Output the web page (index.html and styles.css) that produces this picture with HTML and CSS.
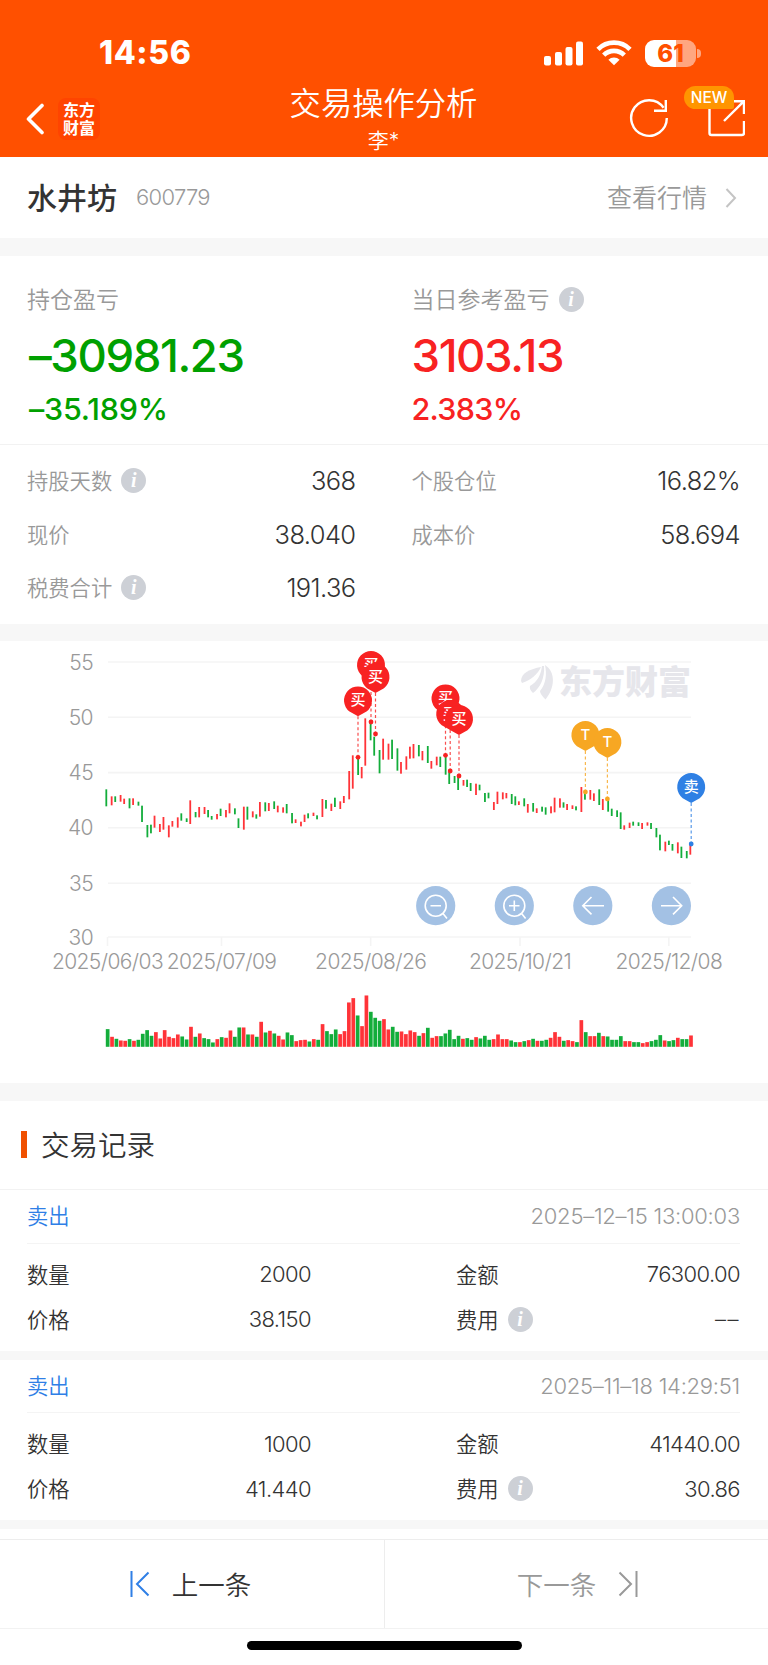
FILE: index.html
```html
<!DOCTYPE html>
<html lang="zh-CN">
<head>
    <meta charset="UTF-8">
    <meta name="viewport" content="width=device-width, initial-scale=1.0">
    <title>交易操作分析</title>
    <link rel="stylesheet" href="styles.css">
</head>
<body>
    <header class="header">
        <div class="status-bar">
            <span class="time">14:56</span>
            <div class="status-icons">
                <svg width="40" height="25" viewBox="0 0 40 25" fill="#fff">
                    <rect x="0" y="15" width="7" height="9.5" rx="2"/>
                    <rect x="11" y="11" width="7" height="13.5" rx="2"/>
                    <rect x="21.5" y="6" width="7" height="18.5" rx="2"/>
                    <rect x="32" y="0.5" width="7" height="24" rx="2"/>
                </svg>
                <svg class="wifi" width="36" height="26" viewBox="0 0 36 26" fill="none" stroke="#fff" stroke-width="4.6">
                    <path d="M2 9.3a22.5 22.5 0 0 1 32 0"/>
                    <path d="M7.7 15.2a14.5 14.5 0 0 1 20.6 0"/>
                    <path d="M18 25.2l-5.6-5.4a8 8 0 0 1 11.2 0z" fill="#fff" stroke="none"/>
                </svg>
                <div class="battery"><span>61</span></div>
                <div class="battery-tip"></div>
            </div>
        </div>
        <nav class="nav">
            <div class="nav-left">
                <svg width="18" height="32" viewBox="0 0 18 32" fill="none" stroke="#fff" stroke-width="3.6" stroke-linecap="round" stroke-linejoin="round"><path d="M16 2.5L2.5 16 16 29.5"/></svg>
                <div class="brand">东方<br>财富</div>
            </div>
            <div class="nav-title">
                <h1>交易操作分析</h1>
                <p>李*</p>
            </div>
            <div class="nav-right">
                <svg width="40" height="40" viewBox="0 0 40 40" fill="none" stroke="#fff" stroke-width="2.4">
                    <path d="M37.8 20A17.8 17.8 0 1 1 34.6 9.800"/>
                    <path d="M36.8 2v10.8H25"/>
                </svg>
                <div class="share">
                    <svg width="38" height="38" viewBox="0 0 38 38" fill="none" stroke="#fff" stroke-width="2.4">
                        <path d="M2.500 9v25a2 2 0 0 0 2 2H35a2 2 0 0 0 2-2V22"/>
                        <path d="M25 2.200H37V15M37 2.200L17 22"/>
                    </svg>
                    <span class="badge">NEW</span>
                </div>
            </div>
        </nav>
    </header>

    <section class="stock">
        <span class="stock-name">水井坊</span>
        <span class="stock-code">600779</span>
        <span class="stock-link">查看行情</span>
        <svg width="12" height="20" viewBox="0 0 12 20" fill="none" stroke="#c4c4c4" stroke-width="2"><path d="M1.500 1L10 10 1.500 19"/></svg>
    </section>

    <section class="position">
        <div class="profit two-col">
            <div class="down">
                <div class="label"><span>持仓盈亏</span></div>
                <div class="amount">–30981.23</div>
                <div class="percent">–35.189%</div>
            </div>
            <div class="up">
                <div class="label"><span>当日参考盈亏</span><i class="info">i</i></div>
                <div class="amount">3103.13</div>
                <div class="percent">2.383%</div>
            </div>
        </div>
        <div class="details two-col">
            <div class="row"><span>持股天数</span><i class="info">i</i><b>368</b></div>
            <div class="row"><span>个股仓位</span><b>16.82%</b></div>
            <div class="row"><span>现价</span><b>38.040</b></div>
            <div class="row"><span>成本价</span><b>58.694</b></div>
            <div class="row"><span>税费合计</span><i class="info">i</i><b>191.36</b></div>
        </div>
    </section>

    <section class="chart">
        <svg width="768" height="442" viewBox="0 1 768 442">
            <g id="grid"></g>
            <g class="watermark">
                <path d="M521 41C521 33 530 29 541 27C538 34 531 40 522 43Z"/>
                <path d="M544 26C545 38 540 48 533 53C530 50 529.500 48 530 46C537 42 541 35 542 26Z"/>
                <path d="M545 25C556 32 555 48 545.500 59.500C542 56 540 53 540 51C546 44 547 34 545 25Z"/>
                <text x="559" y="54">东方财富</text>
            </g>
            <g id="candles"></g>
            <g id="volumes"></g>
            <g id="pins"></g>
            <g class="tools">
                <circle cx="435.700" cy="265.700" r="19.600"/>
                <circle cx="514.300" cy="265.700" r="19.600"/>
                <circle cx="592.800" cy="265.700" r="19.600"/>
                <circle cx="671.400" cy="265.700" r="19.600"/>
                <path d="M446.200 265.700a10.500 10.500 0 1 1-21 0a10.500 10.500 0 1 1 21 0zM443 273.500l4 5M430.500 265.700h10.500"/>
                <path d="M524.800 265.700a10.500 10.500 0 1 1-21 0a10.500 10.500 0 1 1 21 0zM521.600 273.500l4 5M509 265.700h10.500M514.300 260.500v10.500"/>
                <path d="M604 265.700h-21M591.500 257l-8.700 8.700 8.700 8.700"/>
                <path d="M661 265.700h21M673 257l8.700 8.700-8.700 8.700"/>
            </g>
        </svg>
    </section>

    <section class="records">
        <h2><span>交易记录</span></h2>
        <div class="record">
            <div class="record-head"><span>卖出</span><time>2025–12–15 13:00:03</time></div>
            <div class="record-body">
                <div class="row"><span>数量</span><b>2000</b></div>
                <div class="row"><span>金额</span><b>76300.00</b></div>
                <div class="row"><span>价格</span><b>38.150</b></div>
                <div class="row"><span>费用</span><i class="info">i</i><b class="empty">––</b></div>
            </div>
        </div>
        <div class="record">
            <div class="record-head"><span>卖出</span><time>2025–11–18 14:29:51</time></div>
            <div class="record-body">
                <div class="row"><span>数量</span><b>1000</b></div>
                <div class="row"><span>金额</span><b>41440.00</b></div>
                <div class="row"><span>价格</span><b>41.440</b></div>
                <div class="row"><span>费用</span><i class="info">i</i><b>30.86</b></div>
            </div>
        </div>
    </section>

    <footer class="pager">
        <div class="prev">
            <svg width="20" height="26" viewBox="0 0 20 26" fill="none" stroke="#2f7fe6" stroke-width="2"><path d="M1.500 0v26M18.500 1.500L7 13l11.500 11.500"/></svg>
            <span>上一条</span>
        </div>
        <div class="next">
            <span>下一条</span>
            <svg width="20" height="26" viewBox="0 0 20 26" fill="none" stroke="#999" stroke-width="2"><path d="M18.500 0v26M1.500 1.500L13 13 1.500 24.500"/></svg>
        </div>
    </footer>
    <div class="home-bar"></div>

    <script src="chart.js"></script>
</body>
</html>
```
FILE: styles.css
```css
* {
    box-sizing: border-box;
}

body {
    margin: 0;
    width: 768px;
    height: 1665px;
    overflow: hidden;
    background: #fff;
    color: #333;
    font-family: Inter, "Noto Sans CJK SC", sans-serif;
    font-weight: 350;
    display: flex;
    flex-direction: column;
}

h1, h2, p {
    margin: 0;
    font-weight: 350;
}

svg {
    display: block;
    flex: none;
}

/* header */
.header {
    height: 157px;
    flex: none;
    background: #ff5000;
    color: #fff;
}

.status-bar {
    height: 82px;
    padding: 37px 67px 13px 99px;
    display: flex;
    align-items: center;
    justify-content: space-between;
}

.time {
    font-size: 32px;
    font-weight: 800;
    line-height: 32px;
    letter-spacing: 0.6px;
}

.status-icons {
    display: flex;
    align-items: center;
}

.wifi {
    margin: 0 13px 0 12px;
}

.battery {
    width: 51px;
    height: 27px;
    border-radius: 9px;
    background: linear-gradient(90deg, #fff 61%, #ffa680 61%);
    color: #ff5000;
    font-size: 24px;
    font-weight: 800;
    line-height: 28px;
    text-align: center;
}

.battery-tip {
    width: 4px;
    height: 9px;
    margin-left: 1px;
    border-radius: 0 4px 4px 0;
    background: #ffa680;
}

.nav {
    height: 75px;
    padding: 0 23px 0 26px;
    display: grid;
    grid-template-columns: 1fr auto 1fr;
}

.nav-left {
    display: flex;
    align-items: center;
    gap: 14px;
    height: 73px;
}

.brand {
    width: 42px;
    height: 42px;
    padding-top: 2px;
    border-radius: 8px;
    background: #ff4400;
    font-family: "Noto Sans CJK SC", sans-serif;
    font-size: 16px;
    font-weight: 700;
    line-height: 18px;
    text-align: center;
}

.nav-title {
    padding-top: 1px;
    text-align: center;
}

.nav-title h1 {
    margin-right: 4px;
    font-size: 31.3px;
    line-height: 42px;
}

.nav-title p {
    margin-right: 4px;
    font-size: 21px;
    line-height: 31px;
}

.nav-right {
    display: flex;
    align-items: center;
    justify-content: flex-end;
    gap: 38px;
    height: 72px;
}

.share {
    position: relative;
}

.badge {
    position: absolute;
    top: -13px;
    left: -23px;
    width: 50px;
    height: 23px;
    border-radius: 12px 12px 2px 12px;
    background: #ff9500;
    font-size: 15.5px;
    font-weight: 500;
    line-height: 23px;
    text-align: center;
}

/* stock name */
.stock {
    height: 81px;
    flex: none;
    padding: 0 31px 0 27px;
    display: flex;
    align-items: center;
}

.stock-name {
    padding-bottom: 3px;
    font-size: 30px;
    font-weight: 500;
}

.stock-code {
    margin-left: 19px;
    padding-bottom: 1px;
    color: #999;
    font-size: 22px;
    letter-spacing: -0.7px;
}

.stock-link {
    margin-left: auto;
    margin-right: 18px;
    padding-bottom: 3px;
    color: #999;
    font-size: 25px;
}

/* position */
.position {
    height: 403px;
    flex: none;
    border-top: 18px solid #f7f7f7;
    border-bottom: 17px solid #f7f7f7;
}

.two-col {
    padding: 0 28px 0 27px;
    display: grid;
    grid-template-columns: 1fr 1fr;
    column-gap: 56px;
}

.profit {
    height: 189px;
    padding-top: 28px;
    border-bottom: 1px solid #f2f2f2;
}

.label {
    display: flex;
    align-items: center;
    height: 30px;
    color: #999;
    font-size: 23px;
}

.label span {
    padding-bottom: 2px;
}

.amount {
    margin-top: 12px;
    font-size: 45.5px;
    font-weight: 550;
    line-height: 60px;
    letter-spacing: -1.4px;
}

.percent {
    margin-top: 6px;
    font-size: 30.5px;
    font-weight: 500;
    line-height: 34px;
    letter-spacing: -0.7px;
}

.down {
    color: #00a000;
}

.down .amount,
.down .percent {
    padding-left: 2px;
}

.down .percent {
    letter-spacing: -0.2px;
}

.up {
    color: #f82222;
}

.details {
    padding-top: 9px;
}

.row {
    display: flex;
    align-items: center;
}

.row span {
    padding-bottom: 2px;
    font-size: 21.3px;
}

.row b {
    margin-left: auto;
    font-weight: 350;
}

.details .row {
    height: 53.6px;
}

.details span {
    color: #999;
}

.details b {
    font-size: 25.5px;
    letter-spacing: -0.6px;
}

.info {
    width: 25px;
    height: 25px;
    margin-left: 9px;
    border-radius: 50%;
    background: #cdd0d6;
    color: #fff;
    font: italic bold 20px/25px "Liberation Serif", serif;
    text-align: center;
}

/* chart */
.chart {
    height: 442px;
    flex: none;
}

.grid-line {
    stroke: #f4f4f4;
    stroke-width: 1.6;
}

.axis-text {
    fill: #999;
    font-size: 21px;
    letter-spacing: -0.6px;
}

.watermark {
    fill: #e6e6eb;
    font-family: "Noto Sans CJK SC", sans-serif;
    font-size: 33px;
    font-weight: 900;
}

.pin-text {
    fill: #fff;
    font-size: 15px;
    font-weight: 500;
    text-anchor: middle;
}

.tools circle {
    fill: #a3c1e4;
}

.tools path {
    fill: none;
    stroke: #fff;
    stroke-width: 1.6;
}

/* records */
.records {
    height: 456px;
    flex: none;
    border-top: 18px solid #f7f7f7;
}

.records h2 {
    height: 89px;
    padding-left: 21px;
    border-bottom: 1px solid #f2f2f2;
    display: flex;
    align-items: center;
    font-size: 28.5px;
}

.records h2 span {
    padding-bottom: 4px;
}

.records h2::before {
    content: "";
    width: 6px;
    height: 27px;
    margin: 0 14px 2px 0;
    background: #f05000;
}

.record {
    height: 169.5px;
    padding: 0 28px 0 27px;
    border-bottom: 9px solid #f7f7f7;
}

.record-head {
    height: 53.5px;
    border-bottom: 1px solid #f4f4f4;
    display: flex;
    align-items: center;
    justify-content: space-between;
    font-size: 21.3px;
}

.record-head span {
    padding-bottom: 3px;
    color: #2f7fe6;
}

.record-head time {
    color: #999;
    font-size: 22px;
    letter-spacing: -0.25px;
}

.record-body {
    padding-top: 8px;
    display: grid;
    grid-template-columns: 1fr 1fr;
    column-gap: 145px;
}

.record-body .row {
    height: 45px;
}

.record-body b {
    font-size: 22px;
    letter-spacing: -0.6px;
}

.record-body .empty {
    letter-spacing: 1.5px;
}

/* footer */
.pager {
    height: 90px;
    flex: none;
    border-top: 1px solid #ededed;
    border-bottom: 1px solid #f2f2f2;
    display: flex;
    font-size: 26.5px;
}

.pager span {
    padding-bottom: 2px;
}

.prev,
.next {
    flex: 1;
    display: flex;
    align-items: center;
    justify-content: center;
    gap: 22px;
}

.prev {
    padding-right: 3px;
    border-right: 1px solid #ededed;
}

.next {
    padding-left: 2px;
    color: #999;
}

.home-bar {
    width: 275px;
    height: 9px;
    flex: none;
    margin: 12px auto 0;
    border-radius: 5px;
    background: #000;
}
```
FILE: chart.js
```js
// one entry per day: candle colour, volume colour, candle top, candle bottom, volume
// all lengths are device pixels (3 per unit)
const days = `
GG 448 499 53|RR 469 496 30|GG 469 486 24|RR 465 485 19|RR 476 492 18|GG 475 505 23|RR 475 495 18|GG 485 497 21
GG 497 546 39|GG 555 592 50|GG 554 580 33|RR 527 563 44|RR 552 576 25|RR 531 569 50|RR 556 592 30|RR 543 560 26
RR 532 563 37|GG 520 542 31|GG 535 546 22|RR 481 552 60|GG 516 532 30|RR 501 532 40|RG 501 522 26|GG 510 532 23
GG 528 539 13|RR 522 538 23|GG 506 528 29|RR 510 532 27|RR 490 520 49|GG 505 523 30|GG 535 564 58|RR 500 569 58
GG 500 539 37|RR 514 532 37|GG 523 536 30|RR 486 530 75|GG 487 514 43|RR 489 513 48|GG 484 507 40|RR 497 517 33
RR 502 518 22|GG 492 520 43|GG 519 550 35|RR 538 549 17|RR 545 559 20|RR 524 546 21|GG 520 535 16|RR 518 528 23
GG 526 538 21|RR 477 531 68|GG 480 506 47|RG 491 513 38|GG 473 501 52|RR 484 507 38|RR 468 489 47|RR 393 478 133
RR 346 446 146|GG 352 405 94|RR 381 415 62|RR 235 377 154|GG 248 301 105|GG 290 347 87|GG 330 400 78|RR 296 359 83
RR 311 359 52|GG 299 357 60|GG 325 392 45|RR 366 401 46|RR 349 389 38|RR 320 356 49|RR 312 355 44|GG 315 349 33
RR 333 361 41|GG 318 369 57|RR 363 386 27|RR 350 376 32|GG 350 381 32|GG 350 404 40|GG 396 432 51|GG 408 429 23
GG 408 450 33|RR 420 437 24|GG 419 441 26|GG 429 453 21|RR 431 465 29|GG 434 451 25|GG 459 486 33|GG 458 475 21
RR 486 510 23|RR 455 492 37|RR 457 478 23|RR 459 475 23|GG 462 492 19|GG 469 496 14|RR 484 495 14|GG 475 499 17
RR 492 518 20|GG 489 515 24|RR 505 519 18|GG 500 515 18|GG 502 524 21|RR 499 520 27|RR 473 517 44|RR 475 503 30
GG 487 503 18|RR 492 510 20|RR 496 507 17|GG 499 511 14|RR 441 516 80|GG 455 479 44|RR 450 479 32|RR 460 483 32
GG 448 495 42|RR 477 510 32|GG 480 515 31|GG 506 528 21|GG 511 531 21|GG 517 567 32|RR 556 569 17|RR 548 564 17
GG 545 557 14|GG 547 558 14|RR 549 567 11|RR 547 557 14|GG 549 567 17|GG 564 592 21|GG 584 631 35|RR 605 634 19
GG 602 615 17|GG 612 632 20|RR 607 640 27|GG 620 654 23|GG 633 655 23|RR 612 644 34
`.trim().split(/[|\n]/);

const colors = { R: '#ff3338', G: '#13ad3b' };

let candles = '';
let volumes = '';
days.forEach((day, i) => {
    const [kind, top, bottom, volume] = day.split(' ');
    const x = 105.4 + Math.ceil(2.4575 * i - 0.05) * 1.786;
    candles += `<rect x="${x}" y="${top / 3}" width="1.8" height="${(bottom - top) / 3}" fill="${colors[kind[0]]}"/>`;
    volumes += `<rect x="${105.8 + 4.386 * i}" y="${406.8 - volume / 3}" width="3.7" height="${volume / 3}" fill="${colors[kind[1]]}"/>`;
});
document.getElementById('candles').innerHTML = candles;
document.getElementById('volumes').innerHTML = volumes;

// axes
let grid = '';
[[55, 22], [50, 77.2], [45, 132.6], [40, 187.8], [35, 243.2], [30, 297]].forEach(([value, y]) => {
    grid += `<path class="grid-line" d="M108 ${y}H691"/>`;
    grid += `<text class="axis-text" x="93" y="${y + 7.5}" text-anchor="end">${value}</text>`;
});
[['2025/06/03', 107.5], ['2025/07/09', 221.5], ['2025/08/26', 370.7], ['2025/10/21', 520], ['2025/12/08', 668.8]].forEach(([date, x]) => {
    grid += `<path class="grid-line" d="M${x} 297v9"/>`;
    grid += `<text class="axis-text" x="${x}" y="329" text-anchor="middle">${date}</text>`;
});
document.getElementById('grid').innerHTML = grid;

// buy / sell / T pins
const pins = [
    ['买', '#f82222', 358, 60.3],
    ['买', '#f82222', 371, 25],
    ['买', '#f82222', 375.5, 37],
    ['买', '#f82222', 445.5, 58.3],
    ['买', '#f82222', 450.2, 74],
    ['买', '#f82222', 459, 79],
    ['T', '#f7a723', 585.4, 95],
    ['T', '#f7a723', 607.4, 102],
    ['卖', '#2f80e4', 691.2, 147]
];
document.getElementById('pins').innerHTML = pins.map(([text, color, x, y]) => `
    <g transform="translate(${x} ${y})">
        <path d="M0 16V57" stroke="${color}" stroke-dasharray="3 2.5" stroke-width="1.2" opacity="0.8"/>
        <circle cy="57" r="2.4" fill="${color}"/>
        <path d="M0 16L-8.500 11.200A14 14 0 1 1 8.500 11.200Z" fill="${color}"/>
        <text class="pin-text" y="5">${text}</text>
    </g>`).join('');
```
